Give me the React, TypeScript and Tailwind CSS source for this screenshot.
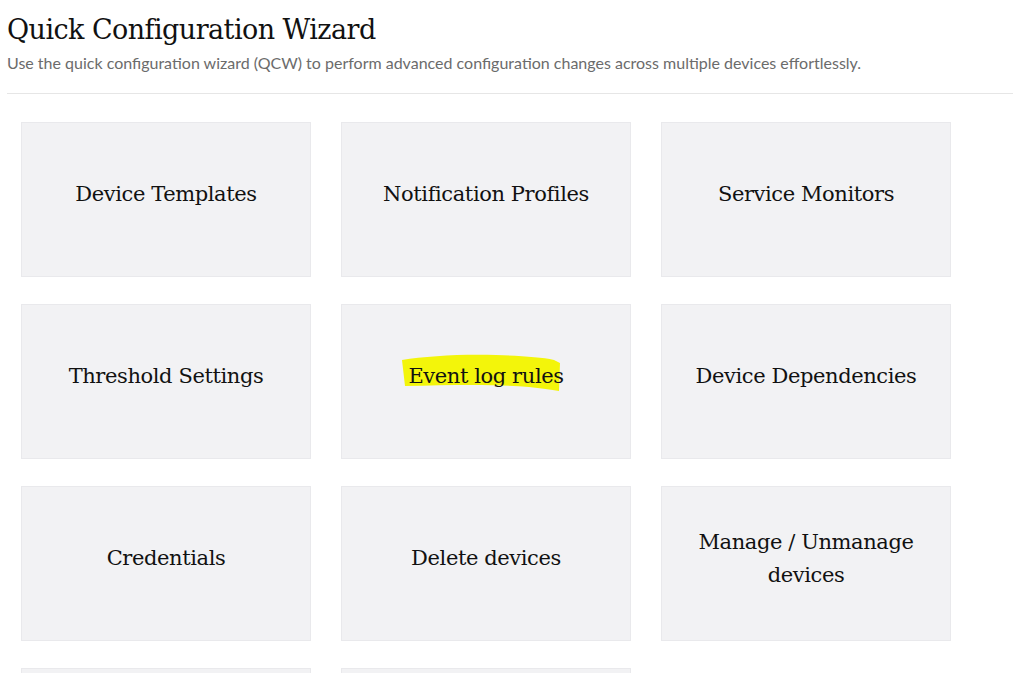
const tiles = [
  'Device Templates',
  'Notification Profiles',
  'Service Monitors',
  'Threshold Settings',
  'Event log rules',
  'Device Dependencies',
  'Credentials',
  'Delete devices',
  'Manage / Unmanage devices',
  '',
  '',
];

function Highlight() {
  return (
    <svg
      className="absolute left-[-7px] top-[-6px] w-[160px] h-[37px] pointer-events-none"
      viewBox="0 0 160 37"
      preserveAspectRatio="none"
    >
      <path
        d="M1 6 C 25 2, 60 0, 95 1 C 120 2, 140 3, 153 6 L 159 9 L 158 37 C 150 36, 140 34, 128 33 C 95 30, 50 31, 4 32 Z"
        fill="#f3f50a"
      />
    </svg>
  );
}

export default function App() {
  return (
    <div className="w-[1013px] h-[673px] overflow-hidden bg-white">
      <div className="px-[7px] pt-[12px]">
        <h1 className="text-[27px] leading-[36px] text-[#111] font-['DejaVu_Serif',serif] tracking-[-0.55px]">
          Quick Configuration Wizard
        </h1>
        <p className="mt-[5px] text-[16px] leading-[20px] text-[#6b6b6b] font-['Lato',sans-serif]">
          Use the quick configuration wizard (QCW) to perform advanced configuration changes across multiple devices effortlessly.
        </p>
      </div>
      <div className="ml-[7px] mt-[20px] border-t border-[#e6e6e6]" />

      <div className="grid grid-cols-[290px_290px_290px] gap-x-[30px] gap-y-[27px] pl-[21px] pt-[28px]">
        {tiles.map((t, i) => (
          <div
            key={i}
            className="h-[155px] bg-[#f2f2f4] border border-[#e9e9ec] flex items-center justify-center text-center px-6 pb-[10px]"
          >
            <span className="relative inline-block text-[21px] leading-[33px] text-[#111] font-['DejaVu_Serif',serif] tracking-[-0.4px]">
              {t === 'Event log rules' && <Highlight />}
              <span className="relative">{t}</span>
            </span>
          </div>
        ))}
      </div>
    </div>
  );
}
